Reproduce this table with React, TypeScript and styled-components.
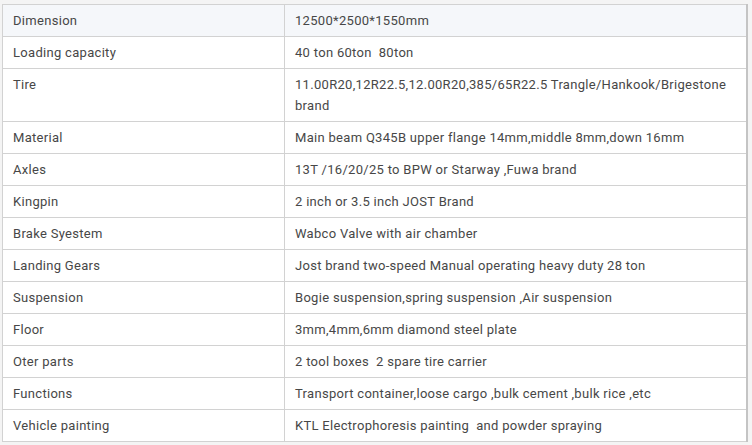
import React from "react";
import styled, { createGlobalStyle } from "styled-components";

const Global = createGlobalStyle`
  html, body { margin: 0; padding: 0; background: #efefef; }
  body { font-family: Roboto, "Noto Sans", Arial, sans-serif; }
`;

const Page = styled.div`
  padding: 4px 4px 4px 2px;
  width: 752px;
  height: 445px;
  box-sizing: border-box;
  background: #f4f4f4;
`;

const Table = styled.table`
  width: 746px;
  border-collapse: collapse;
  background: #fff;
  border-right: 2px solid #c4c4c4;
  table-layout: fixed;
`;

const Row = styled.tr<{ $head?: boolean }>`
  background: ${(p) => (p.$head ? "#f5f7fa" : "#fff")};
`;

const Cell = styled.td`
  border: 1px solid #d2d2d2;
  padding: 5px 10px 5px 10px;
  font-size: 13px;
  letter-spacing: 0.3px;
  line-height: 21px;
  color: #474747;
  vertical-align: top;
  &:first-child { width: 261px; }
`;

const rows: [string, string][] = [
  ["Dimension", "12500*2500*1550mm"],
  ["Loading capacity", "40 ton 60ton\u00a0 80ton"],
  ["Tire", "11.00R20,12R22.5,12.00R20,385/65R22.5 Trangle/Hankook/Brigestone brand"],
  ["Material", "Main beam Q345B upper flange 14mm,middle 8mm,down 16mm"],
  ["Axles", "13T /16/20/25 to BPW or Starway ,Fuwa brand"],
  ["Kingpin", "2 inch or 3.5 inch JOST Brand"],
  ["Brake Syestem", "Wabco Valve with air chamber"],
  ["Landing Gears", "Jost brand two-speed Manual operating heavy duty 28 ton"],
  ["Suspension", "Bogie suspension,spring suspension ,Air suspension"],
  ["Floor", "3mm,4mm,6mm diamond steel plate"],
  ["Oter parts", "2 tool boxes\u00a0 2 spare tire carrier"],
  ["Functions", "Transport container,loose cargo ,bulk cement ,bulk rice ,etc"],
  ["Vehicle painting", "KTL Electrophoresis painting\u00a0 and powder spraying"],
];

export default function App() {
  return (
    <>
      <Global />
      <Page>
        <Table>
          <tbody>
            {rows.map(([k, v], i) => (
              <Row key={k} $head={i === 0}>
                <Cell>{k}</Cell>
                <Cell>{v}</Cell>
              </Row>
            ))}
          </tbody>
        </Table>
      </Page>
    </>
  );
}
